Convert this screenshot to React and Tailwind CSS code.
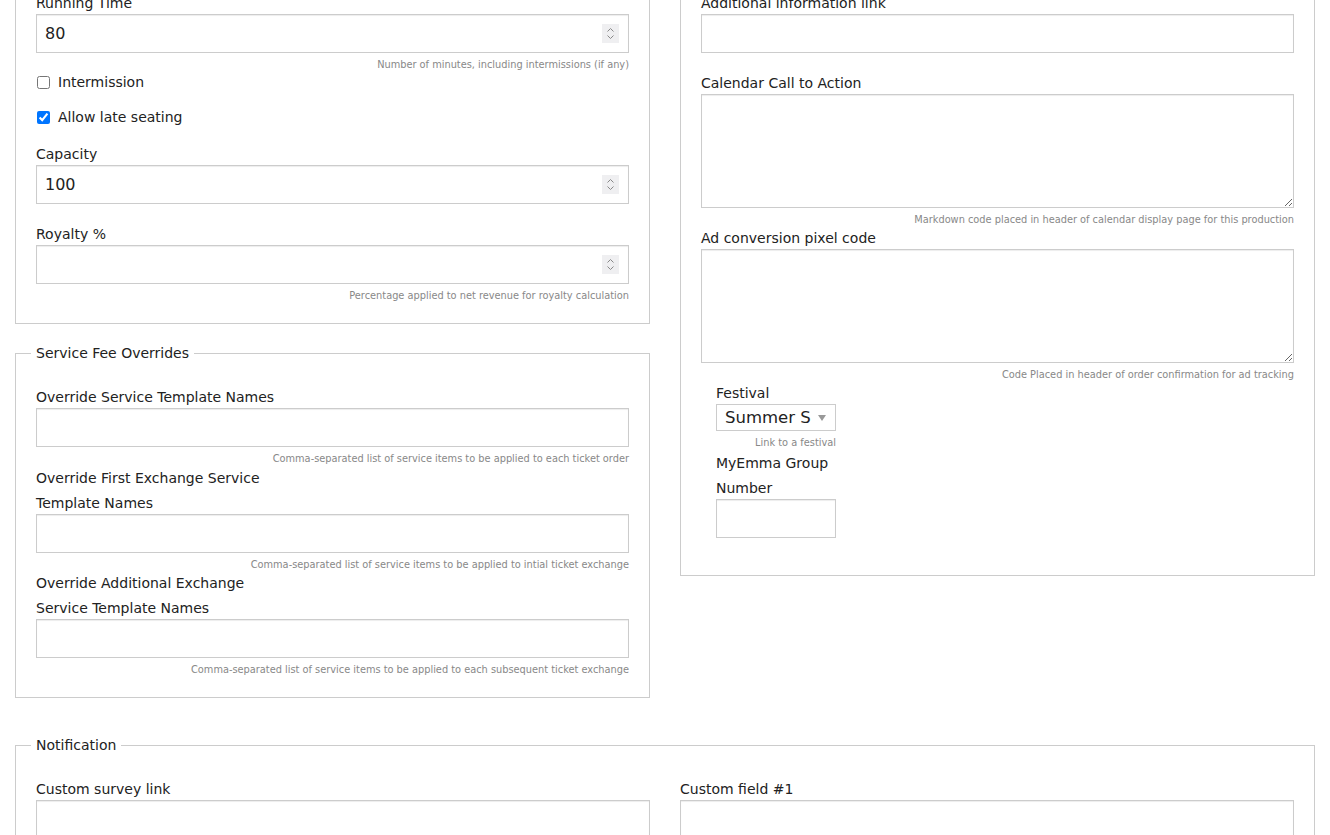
import React from 'react';

const inputCls =
  'block w-full h-[39px] border border-[#ccc] bg-white px-2 text-[16px] text-[#222] shadow-[inset_0_1px_1px_rgba(0,0,0,0.075)] outline-none';
const areaCls =
  'block w-full h-[114px] border border-[#ccc] bg-white px-2 py-1 text-[14px] text-[#222] shadow-[inset_0_1px_1px_rgba(0,0,0,0.075)] outline-none';

// labels sit 2px low in their 25px line; the negative margin keeps the field below in place
function Label({ children, className = '' }) {
  return (
    <label className={`-mb-[2px] block pt-[2px] text-[14px] leading-[25px] text-[#222] ${className}`}>{children}</label>
  );
}

function Help({ children }) {
  return <p className="mt-1 h-[12px] text-right text-[9.8px] leading-[16px] text-[#888]">{children}</p>;
}

function NumberField({ value }) {
  return (
    <div className="relative">
      <input type="text" defaultValue={value} className={inputCls} />
      {/* spin buttons */}
      <div className="absolute right-[10px] top-[10px] flex h-[19px] w-[17px] flex-col items-center justify-center gap-[3px] bg-[#efeff1]">
        <svg width="7" height="4" viewBox="0 0 7 4" fill="none" stroke="#888" strokeWidth="1">
          <path d="M0.5 3.5 L3.5 0.5 L6.5 3.5" />
        </svg>
        <svg width="7" height="4" viewBox="0 0 7 4" fill="none" stroke="#888" strokeWidth="1">
          <path d="M0.5 0.5 L3.5 3.5 L6.5 0.5" />
        </svg>
      </div>
    </div>
  );
}

function Check({ label, checked }) {
  return (
    <label className="flex h-[22px] items-center gap-[8px] text-[14px] text-[#222]">
      <input type="checkbox" defaultChecked={checked} className="ml-px h-[13px] w-[13px]" />
      {label}
    </label>
  );
}

function Legend({ children }) {
  return <legend className="-ml-[5px] px-[5px] text-[14px] leading-[25px] text-[#222]">{children}</legend>;
}

export default function App() {
  return (
    <div className="h-[835px] overflow-hidden bg-white font-['DejaVu_Sans','Verdana',sans-serif]">
      <div className="-mt-[32px] px-[15px]">
        <div className="grid grid-cols-2 items-start gap-x-[30px]">
          <div>
            {/* Performance details */}
            <fieldset className="min-w-0 border border-[#ccc] px-5 pt-5 pb-[23px]">
              <Label>Running Time</Label>
              <NumberField value="80" />
              <Help>Number of minutes, including intermissions (if any)</Help>

              <div className="mt-[2px]">
                <Check label="Intermission" />
              </div>
              <div className="mt-[13px]">
                <Check label="Allow late seating" checked />
              </div>

              <Label className="mt-[12px]">Capacity</Label>
              <NumberField value="100" />

              <Label className="mt-4">Royalty %</Label>
              <NumberField value="" />
              <Help>Percentage applied to net revenue for royalty calculation</Help>
            </fieldset>

            <fieldset className="mt-[17px] min-w-0 border border-[#ccc] px-5 pt-[17px] pb-[23px]">
              <Legend>Service Fee Overrides</Legend>

              <Label className="max-w-[255px]">Override Service Template Names</Label>
              <input type="text" className={inputCls} />
              <Help>Comma-separated list of service items to be applied to each ticket order</Help>

              <Label className="mt-px max-w-[255px]">Override First Exchange Service Template Names</Label>
              <input type="text" className={inputCls} />
              <Help>Comma-separated list of service items to be applied to intial ticket exchange</Help>

              <Label className="max-w-[255px]">Override Additional Exchange Service Template Names</Label>
              <input type="text" className={inputCls} />
              <Help>Comma-separated list of service items to be applied to each subsequent ticket exchange</Help>
            </fieldset>
          </div>

          <fieldset className="min-w-0 border border-[#ccc] px-5 pt-5 pb-[37px]">
            <Label>Additional information link</Label>
            <input type="text" className={inputCls} />

            <Label className="mt-4">Calendar Call to Action</Label>
            <textarea className={areaCls} />
            <Help>Markdown code placed in header of calendar display page for this production</Help>

            <Label>Ad conversion pixel code</Label>
            <textarea className={areaCls} />
            <Help>Code Placed in header of order confirmation for ad tracking</Help>

            <div className="ml-[15px] w-[120px]">
              <Label>Festival</Label>
              <div className="flex h-[27px] items-center justify-between border border-[#ccc] bg-white pl-2 pr-[9px]">
                <span className="overflow-hidden whitespace-nowrap pt-[2px] text-[16.5px] leading-none text-[#222]">
                  Summer S
                </span>
                <svg width="8" height="6" viewBox="0 0 8 6">
                  <path d="M0 0 H8 L4 6 Z" fill="#999" />
                </svg>
              </div>
              <Help>Link to a festival</Help>

              <Label className="mt-[2px]">MyEmma Group Number</Label>
              <input type="text" className={inputCls} />
            </div>
          </fieldset>
        </div>

        <fieldset className="mt-[35px] min-w-0 border border-[#ccc] px-5 pt-[17px] pb-5">
          <Legend>Notification</Legend>
          <div className="grid grid-cols-2 gap-x-[30px]">
            <div>
              <Label>Custom survey link</Label>
              <input type="text" className={inputCls} />
            </div>
            <div>
              <Label>Custom field #1</Label>
              <input type="text" className={inputCls} />
            </div>
          </div>
        </fieldset>
      </div>
    </div>
  );
}
